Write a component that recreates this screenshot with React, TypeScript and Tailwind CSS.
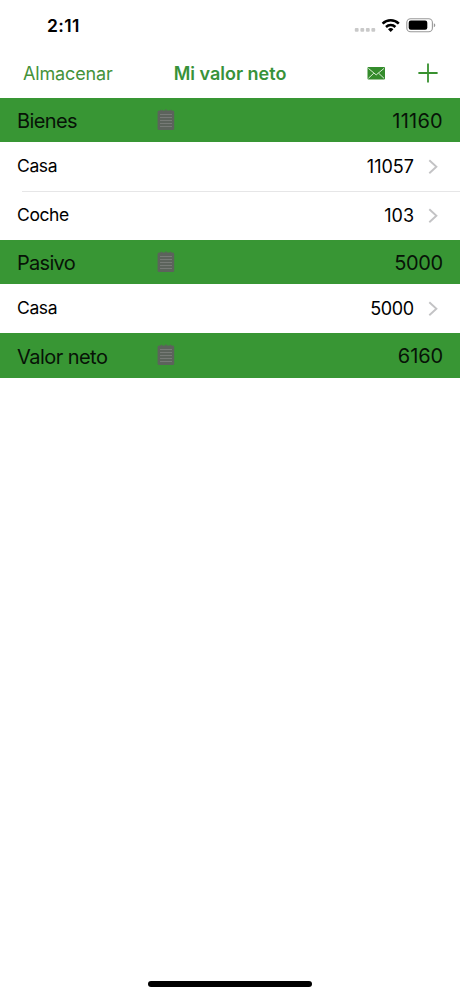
import type { ReactNode } from "react";

function Notepad() {
  return (
    <svg width="18" height="22" viewBox="0 0 18 22" className="block">
      <rect x="0.6" y="1.4" width="16.6" height="19.6" rx="1.6" fill="#5c635c" />
      <path d="M4.5 2V0.8M9 2V0.3M13.5 2V0.8" stroke="#5c635c" strokeWidth="1.2" />
      <path d="M3 5.5h12M3 8.5h12M3 11.5h12M3 14.5h12M3 17.5h12" stroke="#7d827d" strokeWidth="0.8" />
    </svg>
  );
}

function SectionHeader({ title, total }: { title: ReactNode; total: ReactNode }) {
  return (
    <div className="flex h-[44.4px] items-center bg-[#389634] pl-[17px] pr-[17px] text-[20px] text-[#071307]">
      <div className="w-[140px] whitespace-nowrap pt-[2.6px] leading-6">{title}</div>
      <Notepad />
      <div className="ml-auto pt-px leading-6">{total}</div>
    </div>
  );
}

function Row({ name, value, divider }: { name: ReactNode; value: ReactNode; divider?: boolean }) {
  return (
    <div className="flex h-[48.8px] flex-col">
      <div className="flex flex-1 items-center pl-[17px] pr-[22px] text-black">
        <div className="pb-[2px] text-[17.5px] leading-6">{name}</div>
        <div className="ml-auto pt-px text-[18px] leading-6">{value}</div>
        <svg width="10" height="16" viewBox="0 0 10 16" className="ml-[14px] block" fill="none">
          <path d="M1.3 1.2 8.4 7.7 1.3 14.2" stroke="#c3c3c5" strokeWidth="1.9" />
        </svg>
      </div>
      {divider && <div className="-mb-px ml-[22px] h-px shrink-0 bg-[#e6e6e7]" />}
    </div>
  );
}

export default function App() {
  return (
    <div className="flex h-[996px] w-[460px] flex-col overflow-hidden bg-white font-['Inter','Liberation_Sans',sans-serif]">
      <div className="flex h-12 items-center pl-[47px] pr-[24px]">
        <div className="pt-[3px] text-[17.5px] font-semibold leading-6 tracking-[0.4px] text-black">2:11</div>
        <svg width="82" height="18" viewBox="354 17 82 18" className="ml-auto mt-[4px] block">
          <g fill="#c9c9c9">
            <rect x="354.8" y="28" width="3.8" height="3.8" rx="1" />
            <rect x="360.4" y="28" width="3.8" height="3.8" rx="1" />
            <rect x="365.9" y="28" width="3.8" height="3.8" rx="1" />
            <rect x="371.4" y="28" width="3.8" height="3.8" rx="1" />
          </g>
          <g fill="none" stroke="#000" strokeWidth="2.5">
            <path d="M382.6 23.6a11.6 11.6 0 0 1 16.2 0" />
            <path d="M386 27a6.7 6.7 0 0 1 9.4 0" />
          </g>
          <path d="M388 29.2a3.9 3.9 0 0 1 5.4 0L390.7 32Z" />
          <rect x="406.8" y="18.7" width="25.6" height="13" rx="3.8" fill="none" stroke="#999" strokeWidth="1.1" />
          <rect x="408.7" y="20.6" width="18.6" height="9.2" rx="2.1" />
          <path d="M433.8 23.2c2 .8 2 3.2 0 4Z" fill="#999" />
        </svg>
      </div>

      <div className="grid h-[50px] grid-cols-[150px_1fr_150px] items-center">
        <div className="pl-[23px] pt-[2px] text-[18px] leading-6 tracking-[-0.15px] text-[#44923a]">Almacenar</div>
        <div className="whitespace-nowrap pt-[2px] text-center text-[18px] font-semibold leading-6 text-[#38923a]">Mi valor neto</div>
        <div className="flex items-center justify-end pr-[22px]">
          <svg width="18" height="13" viewBox="0 0 18 13" className="mr-[33px] block" fill="none">
            <rect x="0.5" width="17.5" height="12.4" rx="1" fill="#348c2c" />
            <path d="m1.4 1.4 7.8 6.5L17 1.4M1.4 11.3l5.4-5.1M17 11.3l-5.4-5.1" stroke="#d3ead0" strokeWidth="1" />
          </svg>
          <svg width="20" height="20" viewBox="0 0 20 20" className="block">
            <path d="M10 .4v19.2M.4 10h19.2" stroke="#38912f" strokeWidth="1.8" />
          </svg>
        </div>
      </div>

      <SectionHeader title={<span className="tracking-[-0.6px]">Bienes</span>} total={<span className="tracking-[0.25px]">11160</span>} />
      <Row name={<span className="tracking-[-0.4px]">Casa</span>} value="11057" divider />
      <Row name={<span className="tracking-[-0.4px]">Coche</span>} value="103" />
      <SectionHeader title={<span className="tracking-[-0.7px]">Pasivo</span>} total={<span className="mr-[0.4px] tracking-[-0.4px]">5000</span>} />
      <Row name={<span className="tracking-[-0.4px]">Casa</span>} value={<span className="mr-[0.4px] tracking-[-0.4px]">5000</span>} />
      <SectionHeader title={<span className="tracking-[-0.55px]">Valor neto</span>} total={<span className="tracking-[-0.1px]">6160</span>} />

      <div className="mx-auto mb-[9px] mt-auto h-[6px] w-[164px] rounded-full bg-black" />
    </div>
  );
}
